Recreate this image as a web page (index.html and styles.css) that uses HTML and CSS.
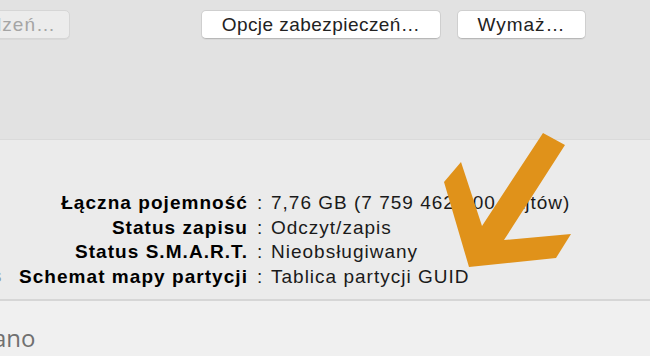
FILE: index.html
```html
<!DOCTYPE html>
<html lang="pl">
<head>
<meta charset="utf-8">
<link rel="stylesheet" href="styles.css">
</head>
<body>
<div class="toolbar">
  <div class="btn btn-cut disabled">Przywróć urządzeń…</div>
  <div class="btn btn-opts">Opcje zabezpieczeń…</div>
  <div class="btn btn-erase">Wymaż…</div>
</div>
<div class="info">
  <span class="stray">s</span>
  <div class="grid">
    <div class="lbl">Łączna pojemność</div><div class="col">:</div><div class="val">7,76 GB (7 759 462 400 bajtów)</div>
    <div class="lbl">Status zapisu</div><div class="col">:</div><div class="val">Odczyt/zapis</div>
    <div class="lbl">Status S.M.A.R.T.</div><div class="col">:</div><div class="val">Nieobsługiwany</div>
    <div class="lbl">Schemat mapy partycji</div><div class="col">:</div><div class="val">Tablica partycji GUID</div>
  </div>
</div>
<div class="bottom"><span class="ano">ano</span></div>
<svg class="arrow" width="650" height="356" viewBox="0 0 650 356">
  <polygon points="543,133 565,145 504,240 571,234 556,258 469,267 444,182 461,162 482,226" fill="#e0921a"/>
</svg>
</body>
</html>
```
FILE: styles.css
```css
html, body {
  margin: 0;
  padding: 0;
}
body {
  width: 650px;
  height: 356px;
  overflow: hidden;
  position: relative;
  font-family: "Liberation Sans", Arial, sans-serif;
  background: #f0f0f0;
}
.toolbar {
  height: 140px;
  background: #e2e2e2;
  border-bottom: 1px solid #dadada;
  display: flex;
  align-items: flex-start;
  padding-top: 10px;
  box-sizing: border-box;
}
.btn {
  height: 29px;
  box-sizing: border-box;
  background: #fff;
  border: 1px solid #cfcfcf;
  border-bottom-color: #b8b8b8;
  border-radius: 5px;
  font-size: 19px;
  letter-spacing: 0.45px;
  line-height: 27px;
  color: #222;
  text-align: center;
  white-space: nowrap;
  overflow: hidden;
  box-shadow: 0 1px 0 rgba(0,0,0,0.04);
}
.btn-cut {
  width: 240px;
  margin-left: -170px;
  text-align: right;
  padding-right: 13px;
  background: #ececec;
  border-color: #d6d6d6;
  color: #a5a5a5;
  letter-spacing: 1px;
}
.btn-opts {
  width: 240px;
  margin-left: 131px;
}
.btn-erase {
  width: 129px;
  margin-left: 16px;
  letter-spacing: 1px;
}
.info {
  height: 159px;
  background: #ebebeb;
  border-bottom: 2px solid #d6d6d6;
  position: relative;
}
.grid {
  display: grid;
  grid-template-columns: 248px 23px auto;
  padding-top: 51px;
  font-size: 19px;
  letter-spacing: 1px;
  line-height: 24.6px;
}
.lbl {
  font-weight: bold;
  text-align: right;
  color: #000;
  letter-spacing: 1.05px;
}
.col {
  padding-left: 9px;
  color: #1a1a1a;
}
.val {
  color: #1a1a1a;
}
.stray {
  position: absolute;
  left: -8px;
  top: 125px;
  font-size: 19px;
  color: #8a9aa8;
}
.bottom {
  padding-top: 20px;
}
.ano {
  display: block;
  margin-left: -7px;
  font-size: 24px;
  color: #707070;
  font-family: "Open Sans", "Liberation Sans", sans-serif;
}
.arrow {
  position: absolute;
  left: 0;
  top: 0;
}
```
